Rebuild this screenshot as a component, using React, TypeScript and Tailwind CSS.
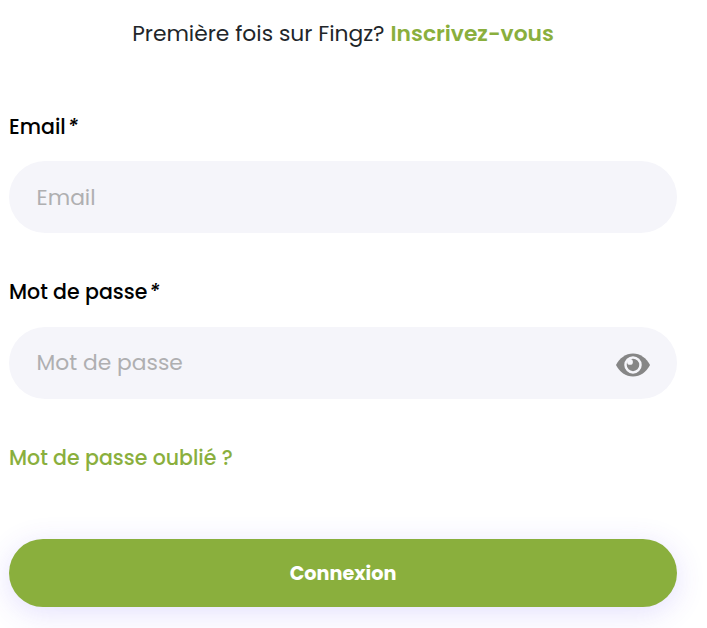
import { useState } from "react";

function EyeIcon() {
  return (
    <svg width="34" height="24" viewBox="0 0 34 24" aria-hidden="true">
      <path
        d="M0 12C3.6 5 9.8.4 17 .4S30.400 5 34 12C30.400 19 24.200 23.500 17 23.500S3.600 19 0 12Z"
        fill="#868686"
      />
      <circle cx="17" cy="11.900" r="7.500" fill="#868686" stroke="#f5f5fa" strokeWidth="2.500" />
      <circle cx="14" cy="8.900" r="2.900" fill="#f5f5fa" />
    </svg>
  );
}

type FieldProps = {
  id: string;
  label: string;
  password?: boolean;
};

function Field({ id, label, password = false }: FieldProps) {
  const [visible, setVisible] = useState(false);
  return (
    <div>
      <label htmlFor={id} className="flex h-8 items-center text-[20.500px] leading-8 font-medium text-black">
        <span>{label}</span>
        <span className="ml-[2px] italic">*</span>
      </label>
      <div
        className={`flex h-[72px] items-center rounded-full bg-[#f5f5fa] pr-[27px] pl-[27.500px] ${
          password ? "mt-[19px]" : "mt-[18px] pt-[2px]"
        }`}
      >
        <input
          id={id}
          type={password && !visible ? "password" : "text"}
          placeholder={label}
          className="min-w-0 flex-1 bg-transparent text-[21.800px] text-[#212529] outline-none placeholder:text-[#afafb1]"
        />
        {password && (
          <button type="button" aria-label="Afficher" onClick={() => setVisible(!visible)} className="mt-1">
            <EyeIcon />
          </button>
        )}
      </div>
    </div>
  );
}

export default function App() {
  return (
    <main className="min-h-[628px] w-[707px] overflow-hidden bg-white pr-[30px] pl-[9px] font-[Poppins,sans-serif]">
      <p className="mt-4 flex h-9 items-center justify-center text-[21.800px] whitespace-nowrap text-[#212529]">
        <span>Première fois sur Fingz?</span>
        <a href="#" className="ml-1.5 font-semibold text-[#8aaf3d]">
          Inscrivez-vous
        </a>
      </p>
      <form className="mt-[59px]" onSubmit={(e) => e.preventDefault()}>
        <Field id="email" label="Email" />
        <div className="mt-[43px]">
          <Field id="password" label="Mot de passe" password />
        </div>
        <a href="#" className="mt-[43px] flex h-8 items-center text-[20.500px] font-medium text-[#8aaf3d]">
          Mot de passe oublié ?
        </a>
        <button
          type="submit"
          className="mt-[65px] block h-[68px] w-full rounded-full bg-[#8aaf3d] pt-[3px] text-[19.200px] font-bold text-white shadow-[0_6px_30px_rgba(85,60,240,0.16)]"
        >
          Connexion
        </button>
      </form>
    </main>
  );
}
